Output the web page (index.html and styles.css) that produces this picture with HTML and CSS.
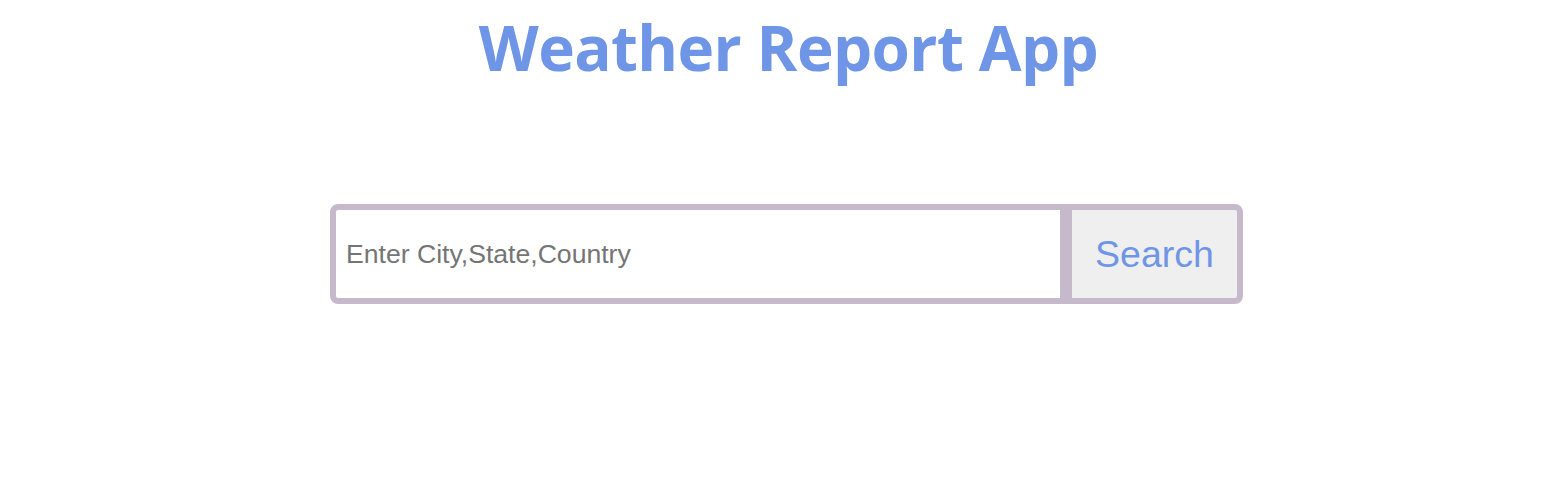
FILE: index.html
```html
<!DOCTYPE html>
<html>
<head>
<meta charset="utf-8">
<link rel="stylesheet" href="styles.css">
</head>
<body>
<div class="page">
  <h1 class="title">Weather Report App</h1>
  <form class="search">
    <input class="search-input" type="text" placeholder="Enter City,State,Country">
    <button class="search-btn" type="button">Search</button>
  </form>
</div>
</body>
</html>
```
FILE: styles.css
```css
html, body {
  margin: 0;
  padding: 0;
  background: #ffffff;
}
.page {
  display: flex;
  flex-direction: column;
  align-items: center;
  padding-left: 10px;
}
.title {
  margin: 8px 0 0 4px;
  font-family: "Open Sans", "Noto Sans", sans-serif;
  font-weight: 700;
  font-size: 62px;
  line-height: 78px;
  color: #6f95e6;
  letter-spacing: -0.6px;
}
.search {
  margin-top: 118px;
  display: flex;
  width: 913px;
  height: 100px;
  box-sizing: border-box;
  border: 6px solid #c6b9cb;
  border-radius: 8px;
  background: #c6b9cb;
  overflow: hidden;
}
.search-input {
  width: 724px;
  border: none;
  outline: none;
  margin: 0;
  padding: 0 10px;
  box-sizing: border-box;
  font-family: "Liberation Sans", Arial, sans-serif;
  font-size: 26.6px;
  background: #ffffff;
  color: #333;
}
.search-input::placeholder {
  color: #757575;
}
.search-btn {
  margin-left: 12px;
  flex: 1;
  border: none;
  background: #efefef;
  font-family: "Liberation Sans", Arial, sans-serif;
  font-size: 37.5px;
  color: #6f95e6;
  padding: 0;
}
```
